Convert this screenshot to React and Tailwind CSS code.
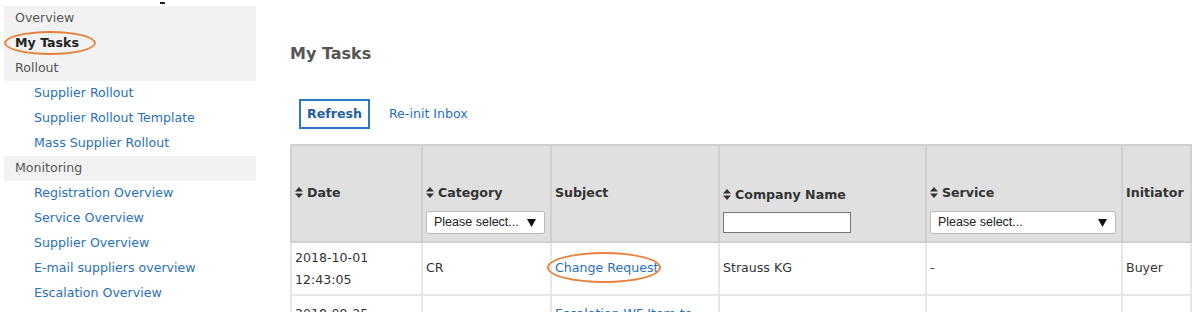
import React from "react";

// Left navigation, grouped in gray section headers and indented links
const NAV = [
  { label: "Overview", type: "head" },
  { label: "My Tasks", type: "head", active: true },
  { label: "Rollout", type: "head" },
  { label: "Supplier Rollout", type: "link" },
  { label: "Supplier Rollout Template", type: "link" },
  { label: "Mass Supplier Rollout", type: "link" },
  { label: "Monitoring", type: "head" },
  { label: "Registration Overview", type: "link" },
  { label: "Service Overview", type: "link" },
  { label: "Supplier Overview", type: "link" },
  { label: "E-mail suppliers overview", type: "link" },
  { label: "Escalation Overview", type: "link" },
];

function SortIcon() {
  return (
    <svg width="8" height="11" viewBox="0 0 8 11" className="inline-block mr-[4px] -mt-[2px] align-middle">
      <path d="M0 4.5 L4 0 L8 4.5 Z M0 6.5 L4 11 L8 6.5 Z" fill="#333" />
    </svg>
  );
}

function Select({ className }) {
  return (
    <div
      className={`flex items-center justify-between h-[23px] bg-white border border-[#bbb] rounded-[2px] pl-[7px] pr-[8px] text-[12.5px] font-normal text-[#222] ${className}`}
      style={{ fontFamily: '"Liberation Sans", Arial, sans-serif' }}
    >
      <span>Please select...</span>
      <svg width="9" height="9" viewBox="0 0 9 9">
        <path d="M0 1 L9 1 L4.5 9 Z" fill="#111" />
      </svg>
    </div>
  );
}

function Ellipse({ className }) {
  return (
    <span
      className={`absolute border-2 border-[#e8823a] rounded-[50%] pointer-events-none ${className}`}
    />
  );
}

export default function App() {
  return (
    <div
      className="flex w-[1197px] h-[312px] overflow-hidden bg-white text-[12.6px] text-[#333]"
      style={{ fontFamily: '"DejaVu Sans", Verdana, sans-serif' }}
    >
      {/* Sidebar */}
      <div className="relative w-[256px] shrink-0 pt-[6px]">
        <span className="absolute left-[160px] top-[2px] w-[5px] h-[2px] bg-[#222]" />
        {NAV.map((item) =>
          item.type === "head" ? (
            <div
              key={item.label}
              className={`relative h-[25px] ml-[4px] pl-[11px] flex items-center bg-[#f2f2f2] ${
                item.active ? "font-bold text-[#222]" : "text-[#555]"
              }`}
            >
              {item.label}
              {item.active && <Ellipse className="left-0 top-[0px] w-[92px] h-[24px]" />}
            </div>
          ) : (
            <div key={item.label} className="h-[25px] pl-[34px] flex items-center text-[#2a6fba]">
              {item.label}
            </div>
          )
        )}
      </div>

      {/* Main content */}
      <div className="pl-[34px] pt-[44px] flex-1">
        <h1 className="text-[16px] font-bold text-[#555] leading-[20px]">My Tasks</h1>

        <div className="flex items-center mt-[35px] ml-[9px] gap-[19px]">
          <button className="h-[30px] px-[6px] border-2 border-[#2a77c4] text-[#245f9e] font-bold">
            Refresh
          </button>
          <span className="text-[#2a6fba]">Re-init Inbox</span>
        </div>

        <table className="mt-[15px] table-fixed border-collapse w-[900px]">
          <colgroup>
            <col className="w-[131px]" />
            <col className="w-[129px]" />
            <col className="w-[168px]" />
            <col className="w-[207px]" />
            <col className="w-[196px]" />
            <col className="w-[69px]" />
          </colgroup>
          <thead>
            <tr className="h-[97px] bg-[#e0e0e0] font-bold text-[#333] text-left">
              <th className="border-2 border-[#d0d0d0] px-[3px] align-middle">
                <SortIcon />Date
              </th>
              <th className="border-2 border-[#d0d0d0] px-[3px] pt-[37px] pb-0 align-top">
                <div className="h-[20px] leading-[20px]"><SortIcon />Category</div>
                <Select className="mt-[8px] w-[119px]" />
              </th>
              <th className="border-2 border-[#d0d0d0] px-[3px] align-middle">Subject</th>
              <th className="border-2 border-[#d0d0d0] px-[3px] pt-[39px] pb-0 align-top">
                <div className="h-[20px] leading-[20px]"><SortIcon />Company Name</div>
                <div className="mt-[7px] w-[128px] h-[21px] bg-white border border-[#777]" />
              </th>
              <th className="border-2 border-[#d0d0d0] px-[3px] pt-[37px] pb-0 align-top">
                <div className="h-[20px] leading-[20px]"><SortIcon />Service</div>
                <Select className="mt-[8px] w-[186px]" />
              </th>
              <th className="border-2 border-[#d0d0d0] px-[3px] align-middle">Initiator</th>
            </tr>
          </thead>
          <tbody>
            <tr className="h-[53px]">
              <td className="border-2 border-[#e6e6e6] px-[3px] leading-[22px]">
                2018-10-01
                <br />
                12:43:05
              </td>
              <td className="border-2 border-[#e6e6e6] px-[3px]">CR</td>
              <td className="border-2 border-[#e6e6e6] px-[3px]">
                <span className="relative text-[#2a6fba]">
                  Change Request
                  <Ellipse className="-left-[8px] -top-[8px] w-[114px] h-[31px]" />
                </span>
              </td>
              <td className="border-2 border-[#e6e6e6] px-[3px]">Strauss KG</td>
              <td className="border-2 border-[#e6e6e6] px-[3px]">-</td>
              <td className="border-2 border-[#e6e6e6] px-[3px]">Buyer</td>
            </tr>
            <tr className="h-[53px] align-top">
              <td className="border-2 border-[#e6e6e6] px-[3px] pt-[7px] leading-[22px]">2018-09-25</td>
              <td className="border-2 border-[#e6e6e6] px-[3px]" />
              <td className="border-2 border-[#e6e6e6] px-[3px] pt-[7px] leading-[22px] text-[#2a6fba]">
                Escalation WF Item to
              </td>
              <td className="border-2 border-[#e6e6e6] px-[3px]" />
              <td className="border-2 border-[#e6e6e6] px-[3px]" />
              <td className="border-2 border-[#e6e6e6] px-[3px]" />
            </tr>
          </tbody>
        </table>
      </div>
    </div>
  );
}
